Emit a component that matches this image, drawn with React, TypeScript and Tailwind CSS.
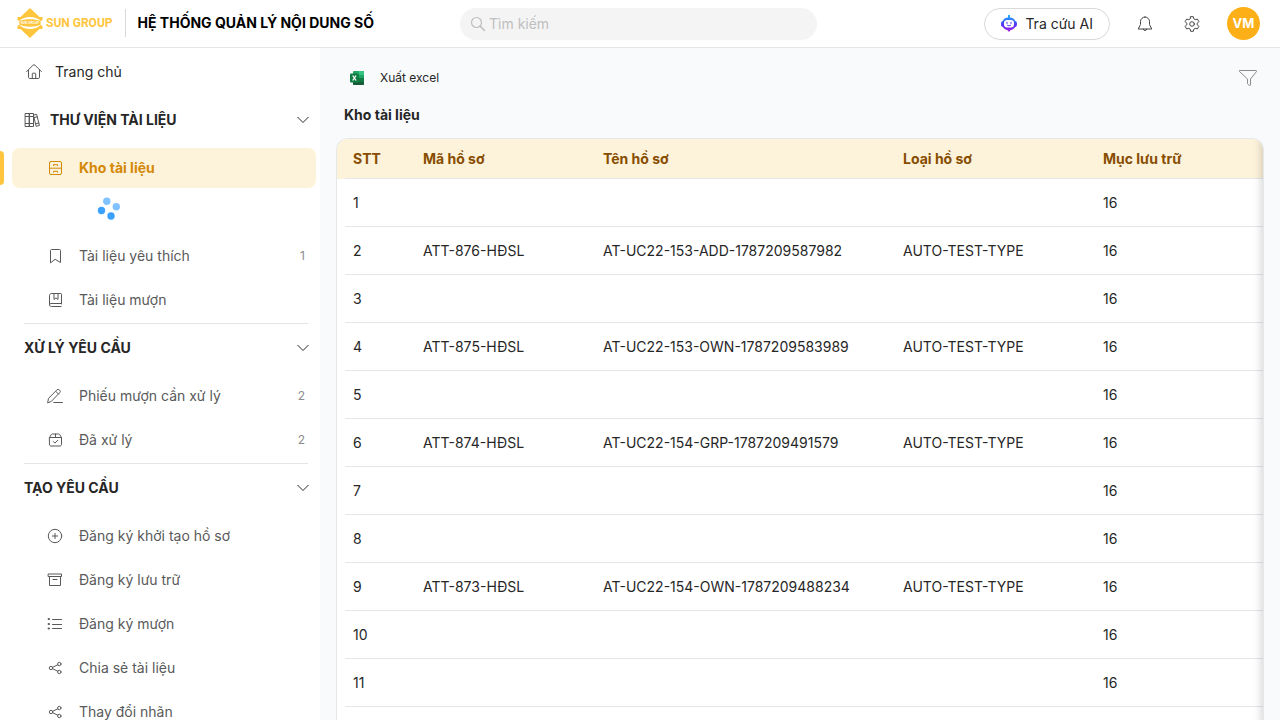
import type { ReactNode } from "react";

type IconProps = { children: ReactNode; size?: string; className?: string; viewBox?: string };

function Icon({ children, size = "size-4", className = "", viewBox = "0 0 16 16" }: IconProps) {
    return (
        <svg
            viewBox={viewBox}
            className={`${size} shrink-0 ${className}`}
            fill="none"
            stroke="currentColor"
            strokeWidth="1"
            strokeLinecap="round"
            strokeLinejoin="round"
            aria-hidden="true"
        >
            {children}
        </svg>
    );
}

const ICONS = {
    home: (
        <Icon>
            <path d="M.6 7.6 7.1 1.1a1.3 1.3 0 0 1 1.8 0l6.5 6.5M2.5 6v7.3c0 .7.5 1.2 1.2 1.2h8.6c.7 0 1.2-.5 1.2-1.2V6M6.3 14.3V9.7c0-.3.2-.5.5-.5h2.4c.3 0 .5.2.5.5v4.6" />
        </Icon>
    ),
    books: (
        <Icon>
            <path d="M1.5 1.5h4v13h-4zM5.5 1.5h4v13h-4zM1.5 4.5h8M1.5 11.5h8M9.8 3l2.8-.7 2.8 11.1-2.9.8zM10.5 5.5l2.8-.7M11.9 11.8l2.9-.8" />
        </Icon>
    ),
    drawer: (
        <Icon>
            <rect x="2.5" y="1.5" width="12" height="13" rx="1.5" />
            <path d="M2.5 8.2h12M6.5 5.6v-.9h4v.9M6.5 12.2v-.9h4v.9" />
        </Icon>
    ),
    bookmark: (
        <Icon>
            <path d="M3.5 14.5v-12c0-.6.4-1 1-1h8c.6 0 1 .4 1 1v12l-5-3z" />
        </Icon>
    ),
    book: (
        <Icon>
            <path d="M14.5 12V2.3c0-.5-.3-.8-.8-.8H4.3c-1 0-1.8.8-1.8 1.8v9.4c0 1 .8 1.8 1.8 1.8H14M2.5 13c0-.9.6-1.5 1.500-1.500h10.500M7 1.500v6l2-1.600 2 1.600v-6" />
        </Icon>
    ),
    pencil: (
        <Icon>
            <path d="M.7 14.500l.8-4.100L9.900 1.900a1.700 1.700 0 0 1 2.400 0l.4.400a1.700 1.700 0 0 1 0 2.400L4.500 13.200zM8.700 3.300l2.800 2.800M6.800 14.500h8.700" />
        </Icon>
    ),
    checkBox: (
        <Icon>
            <path d="M2.500 5.500 4.300 2.500c.2-.4.500-.5.900-.5h6.600c.4 0 .7.100.9.500l1.800 3v7c0 .9-.6 1.500-1.500 1.500H4c-.9 0-1.500-.6-1.500-1.500zM2.500 5.500h12M8.500 2v3.500M6.400 9.600l1.500 1.500 2.800-2.800" />
        </Icon>
    ),
    plus: (
        <Icon>
            <circle cx="8" cy="8" r="6.700" />
            <path d="M8 5.400v5.200M5.400 8h5.200" />
        </Icon>
    ),
    archive: (
        <Icon>
            <path d="M1.500 2h13v2.500h-13zM2.500 4.500v9h11v-9M6 7.500h4" />
        </Icon>
    ),
    list: (
        <Icon>
            <path d="M5.500 3.500h9M5.500 8.500h9M5.500 12.500h9" />
            <path d="M1.500 2.500h1v1h-1zM1.500 7.500h1v1h-1zM1.500 12h1v1h-1z" />
        </Icon>
    ),
    share: (
        <Icon>
            <circle cx="4" cy="8" r="1.700" />
            <circle cx="12.300" cy="4" r="1.700" />
            <circle cx="12.300" cy="12" r="1.700" />
            <path d="m5.600 7.300 5.100-2.500M5.600 8.700l5.100 2.500" />
        </Icon>
    ),
};

type MenuItem = { label: string; icon: ReactNode; count?: number; active?: boolean; loading?: boolean };
type MenuSection = { title: string; icon?: ReactNode; items: MenuItem[] };

const sections: MenuSection[] = [
    {
        title: "THƯ VIỆN TÀI LIỆU",
        icon: ICONS.books,
        items: [
            { label: "Kho tài liệu", icon: ICONS.drawer, active: true, loading: true },
            { label: "Tài liệu yêu thích", icon: ICONS.bookmark, count: 1 },
            { label: "Tài liệu mượn", icon: ICONS.book },
        ],
    },
    {
        title: "XỬ LÝ YÊU CẦU",
        items: [
            { label: "Phiếu mượn cần xử lý", icon: ICONS.pencil, count: 2 },
            { label: "Đã xử lý", icon: ICONS.checkBox, count: 2 },
        ],
    },
    {
        title: "TẠO YÊU CẦU",
        items: [
            { label: "Đăng ký khởi tạo hồ sơ", icon: ICONS.plus },
            { label: "Đăng ký lưu trữ", icon: ICONS.archive },
            { label: "Đăng ký mượn", icon: ICONS.list },
            { label: "Chia sẻ tài liệu", icon: ICONS.share },
            { label: "Thay đổi nhãn", icon: ICONS.share },
        ],
    },
];

const columns = [
    { title: "STT", width: "w-[70px]" },
    { title: "Mã hồ sơ", width: "w-[180px]" },
    { title: "Tên hồ sơ", width: "w-[300px]" },
    { title: "Loại hồ sơ", width: "w-[200px]" },
    { title: "Mục lưu trữ", width: "w-[200px]" },
];

const TYPE = "AUTO-TEST-TYPE";
const rows = [
    ["1", "", "", "", "16"],
    ["2", "ATT-876-HĐSL", "AT-UC22-153-ADD-1787209587982", TYPE, "16"],
    ["3", "", "", "", "16"],
    ["4", "ATT-875-HĐSL", "AT-UC22-153-OWN-1787209583989", TYPE, "16"],
    ["5", "", "", "", "16"],
    ["6", "ATT-874-HĐSL", "AT-UC22-154-GRP-1787209491579", TYPE, "16"],
    ["7", "", "", "", "16"],
    ["8", "", "", "", "16"],
    ["9", "ATT-873-HĐSL", "AT-UC22-154-OWN-1787209488234", TYPE, "16"],
    ["10", "", "", "", "16"],
    ["11", "", "", "", "16"],
];

function Logo() {
    return (
        <a href="#" className="flex items-center gap-[3px] text-[#ffc53d]">
            <svg viewBox="0 0 26 30" className="h-[30px] w-[26px]" fill="currentColor" aria-hidden="true">
                <path d="M13 0 22.500 9H25.500v12H22.500L13 30 3.500 21H.5V9h3z" />
                <path d="M2.500 13C7 7.800 19 7.800 23.500 13v4C19 22.200 7 22.200 2.500 17z" fill="#fff" />
                <path d="M0 12l2.500 1v4L0 18zM26 12l-2.500 1v4l2.500 1z" fill="#fff" />
                <path d="M2.500 13.200c5-2.600 16-2.600 21 0v3.600c-5 2.600-16 2.600-21 0z" />
                <text x="13" y="16" fontSize="3" fontWeight="700" textAnchor="middle" fill="#fff" fontFamily="Liberation Sans, sans-serif">
                    SUN GROUP
                </text>
            </svg>
            <span className="font-['Roboto',sans-serif] text-xs font-bold whitespace-nowrap">SUN GROUP</span>
        </a>
    );
}

function RobotIcon() {
    return (
        <svg viewBox="0 0 16 18" className="h-[18px] w-4" aria-hidden="true">
            <defs>
                <linearGradient id="robot" x1="0" y1="0" x2="0" y2="1">
                    <stop offset="0" stopColor="#1fb6ff" />
                    <stop offset="0.25" stopColor="#2f80ff" />
                    <stop offset="0.6" stopColor="#5a2df5" />
                    <stop offset="1" stopColor="#b020e0" />
                </linearGradient>
            </defs>
            <path
                fill="url(#robot)"
                d="M7 0h2v2.500c2.500.1 4.500 1.300 5.200 3.500 1.100.2 1.800 1 1.800 3s-.7 2.900-1.900 3.100c-.9 1.900-2.600 2.700-4.400 2.900L8 17l-1.700-2c-1.800-.2-3.500-1-4.400-2.900C.7 11.900 0 11 0 9s.7-2.800 1.800-3C2.500 3.800 4.500 2.600 7 2.500z"
            />
            <rect x="3" y="5" width="10" height="7.500" rx="3.200" fill="#fff" />
            <path d="M6 7.200v1.300M10 7.200v1.300M6.200 10.200c1 .8 2.600.8 3.600 0" stroke="#5a3df5" strokeWidth="1" fill="none" strokeLinecap="round" />
        </svg>
    );
}

function ExcelIcon() {
    return (
        <svg viewBox="0 0 14 14" className="size-3.5" aria-hidden="true">
            <rect x="3" width="11" height="14" rx="1" fill="#21a366" />
            <path d="M8.500 0H13a1 1 0 0 1 1 1v3H8.500z" fill="#33c481" />
            <path d="M8.500 7H14v3.500H8.500z" fill="#107c41" />
            <path d="M3 10.500h11V13a1 1 0 0 1-1 1H4a1 1 0 0 1-1-1z" fill="#185c37" />
            <rect y="2.500" width="9" height="9" rx="1" fill="#107c41" />
            <path d="m2.700 4.500 3.400 5M6.100 4.500l-3.400 5" stroke="#fff" strokeWidth="1.300" />
        </svg>
    );
}

function Header() {
    return (
        <header className="flex h-12 shrink-0 items-center border-b border-[#e5e5e5] bg-white px-[17px]">
            <div className="flex flex-1 items-center pb-0.5">
                <Logo />
                <div className="mr-3 ml-3 h-7 w-px bg-[#d9d9d9]" />
                <h1 className="text-sm font-bold whitespace-nowrap text-black">HỆ THỐNG QUẢN LÝ NỘI DUNG SỐ</h1>
            </div>
            <label className="flex h-8 w-[357px] items-center gap-[3px] rounded-full bg-[#f4f4f4] px-2.5 text-[#bfbfbf]">
                <Icon>
                    <circle cx="6.500" cy="6.500" r="5" strokeWidth="1.200" />
                    <path d="m10.400 10.400 4.100 4.100" strokeWidth="1.500" />
                </Icon>
                <input
                    type="text"
                    aria-label="Tìm kiếm"
                    placeholder="Tìm kiếm"
                    className="min-w-0 flex-1 bg-transparent text-sm outline-none placeholder:text-[#bfbfbf]"
                />
            </label>
            <div className="flex flex-1 items-center justify-end pr-[3px]">
                <button type="button" className="flex h-8 items-center gap-2 rounded-full border border-[#d9d9d9] bg-white px-4 text-sm text-[#262626]">
                    <RobotIcon />
                    Tra cứu AI
                </button>
                <button type="button" aria-label="Thông báo" className="ml-[27px] text-[#434343]">
                    <Icon>
                        <path d="M8 1a4.500 4.500 0 0 0-4.500 4.500v3L1.200 13h13.600l-2.300-4.500v-3A4.500 4.500 0 0 0 8 1zM6.200 13.200a1.900 1.900 0 0 0 3.600 0" />
                    </Icon>
                </button>
                <button type="button" aria-label="Cài đặt" className="ml-[31px] text-[#434343]">
                    <Icon>
                        <path d="M6.700.7h2.600l.6 2.200 1.300.8 2.200-.6 1.500 2.500L13.300 7.200v1.600l1.600 1.600-1.500 2.500-2.200-.6-1.300.8-.6 2.200H6.700l-.6-2.200-1.300-.8-2.200.6-1.500-2.500 1.600-1.600V7.200L1.100 5.600l1.500-2.500 2.200.6 1.300-.8z" />
                        <circle cx="8" cy="8" r="2.300" />
                    </Icon>
                </button>
                <button type="button" className="ml-[27px] size-[33px] rounded-full bg-[#fcaf17] text-[13px] font-bold text-white">
                    VM
                </button>
            </div>
        </header>
    );
}

function Chevron() {
    return (
        <Icon size="size-3" viewBox="0 0 12 12" className="text-[#262626]">
            <path d="m.8 3.300 5.200 5.200 5.200-5.200" />
        </Icon>
    );
}

function Sidebar() {
    return (
        <nav className="w-80 shrink-0 overflow-hidden bg-white">
            <a href="#" className="flex h-12 items-center gap-[13px] pl-[26px] text-[#262626]">
                <span className="text-[#595959]">{ICONS.home}</span>
                Trang chủ
            </a>
            {sections.map((section, i) => (
                <section key={section.title}>
                    {i > 0 && <hr className="mr-3 ml-6 border-[#e5e5e5]" />}
                    <button type="button" className="flex h-12 w-full items-center gap-2.5 pr-[11px] pl-6 font-bold text-[#262626]">
                        {section.icon && <span className="text-[#595959]">{section.icon}</span>}
                        <span className="flex-1 text-left">{section.title}</span>
                        <Chevron />
                    </button>
                    <ul className="flex flex-col gap-1 pt-1 pb-[3px]">
                        {section.items.map((item) => (
                            <li key={item.label}>
                                <div className="flex items-center">
                                    <span className={item.active ? "h-[34px] w-1 rounded-r-sm bg-[#ffc53d]" : "w-1"} />
                                    <a
                                        href="#"
                                        className={`mr-1 ml-2 flex h-10 flex-1 items-center gap-4 rounded-lg pr-[11px] pl-[35px] ${
                                            item.active ? "bg-[#fdf2da] font-bold text-[#d48806]" : "text-[#595959]"
                                        }`}
                                    >
                                        {item.icon}
                                        <span className="flex-1">{item.label}</span>
                                        {item.count && <span className="text-xs text-[#8c8c8c]">{item.count}</span>}
                                    </a>
                                </div>
                                {item.loading && (
                                    <div className="h-11 pt-1.5 pl-[96px]" role="status" aria-label="Đang tải">
                                        <svg viewBox="0 0 26 26" className="size-[26px]" fill="#1890ff">
                                            <circle cx="10.800" cy="7.300" r="3.700" opacity="0.550" />
                                            <circle cx="20.300" cy="12.700" r="3.700" opacity="0.550" />
                                            <circle cx="5.500" cy="16.500" r="3.700" opacity="0.850" />
                                            <circle cx="15" cy="22" r="3.700" opacity="0.850" />
                                        </svg>
                                    </div>
                                )}
                            </li>
                        ))}
                    </ul>
                </section>
            ))}
        </nav>
    );
}

function DocumentTable() {
    return (
        <div className="relative min-h-0 flex-1 overflow-hidden rounded-t-xl border border-b-0 border-[#e5e7eb] bg-white">
            <table className="w-full min-w-[950px] table-fixed">
                <thead>
                    <tr className="bg-[#fdf2da] text-left text-[#874d00]">
                        {columns.map((col) => (
                            <th key={col.title} className={`${col.width} p-0 font-bold first:pl-2 first:*:pl-2`}>
                                <div className="flex h-10 items-center border-b border-[#e5e7eb] px-4">{col.title}</div>
                            </th>
                        ))}
                    </tr>
                </thead>
                <tbody>
                    {rows.map((row) => (
                        <tr key={row[0]} className="text-[#262626]">
                            {row.map((value, i) => (
                                <td key={columns[i].title} className="p-0 first:pl-2 first:*:pl-2">
                                    <div className="flex h-12 items-center border-b border-[#e5e7eb] px-4">{value}</div>
                                </td>
                            ))}
                        </tr>
                    ))}
                </tbody>
            </table>
            {/* fade on the edge where more columns continue */}
            <div className="pointer-events-none absolute inset-y-0 right-0 w-8 shadow-[inset_-10px_0_8px_-8px_rgba(5,5,5,0.16)]" />
        </div>
    );
}

export default function App() {
    return (
        <div className="flex h-screen flex-col overflow-hidden bg-white font-['Inter',sans-serif] text-sm">
            <Header />
            <div className="flex min-h-0 flex-1">
                <Sidebar />
                <main className="flex min-w-0 flex-1 flex-col bg-[#f9fafc] px-4">
                    <div className="flex h-14 items-center justify-between pt-1 pr-1.5 pl-3.5">
                        <button type="button" className="flex items-center gap-4 text-xs text-[#262626]">
                            <ExcelIcon />
                            Xuất excel
                        </button>
                        <button type="button" aria-label="Bộ lọc" className="text-[#8c8c8c]">
                            <Icon size="size-5" viewBox="0 0 20 20">
                                <path d="M2 2.500h16c.6 0 .8.500.5 1L12.500 11v5.800c0 .6-.5.900-1 .6l-1.500-1c-.3-.2-.5-.5-.5-.8V11L1.500 3.500c-.3-.5-.1-1 .5-1z" />
                            </Icon>
                        </button>
                    </div>
                    <h2 className="h-[34px] pl-2 leading-[22px] font-bold text-[#262626]">Kho tài liệu</h2>
                    <DocumentTable />
                </main>
            </div>
        </div>
    );
}
